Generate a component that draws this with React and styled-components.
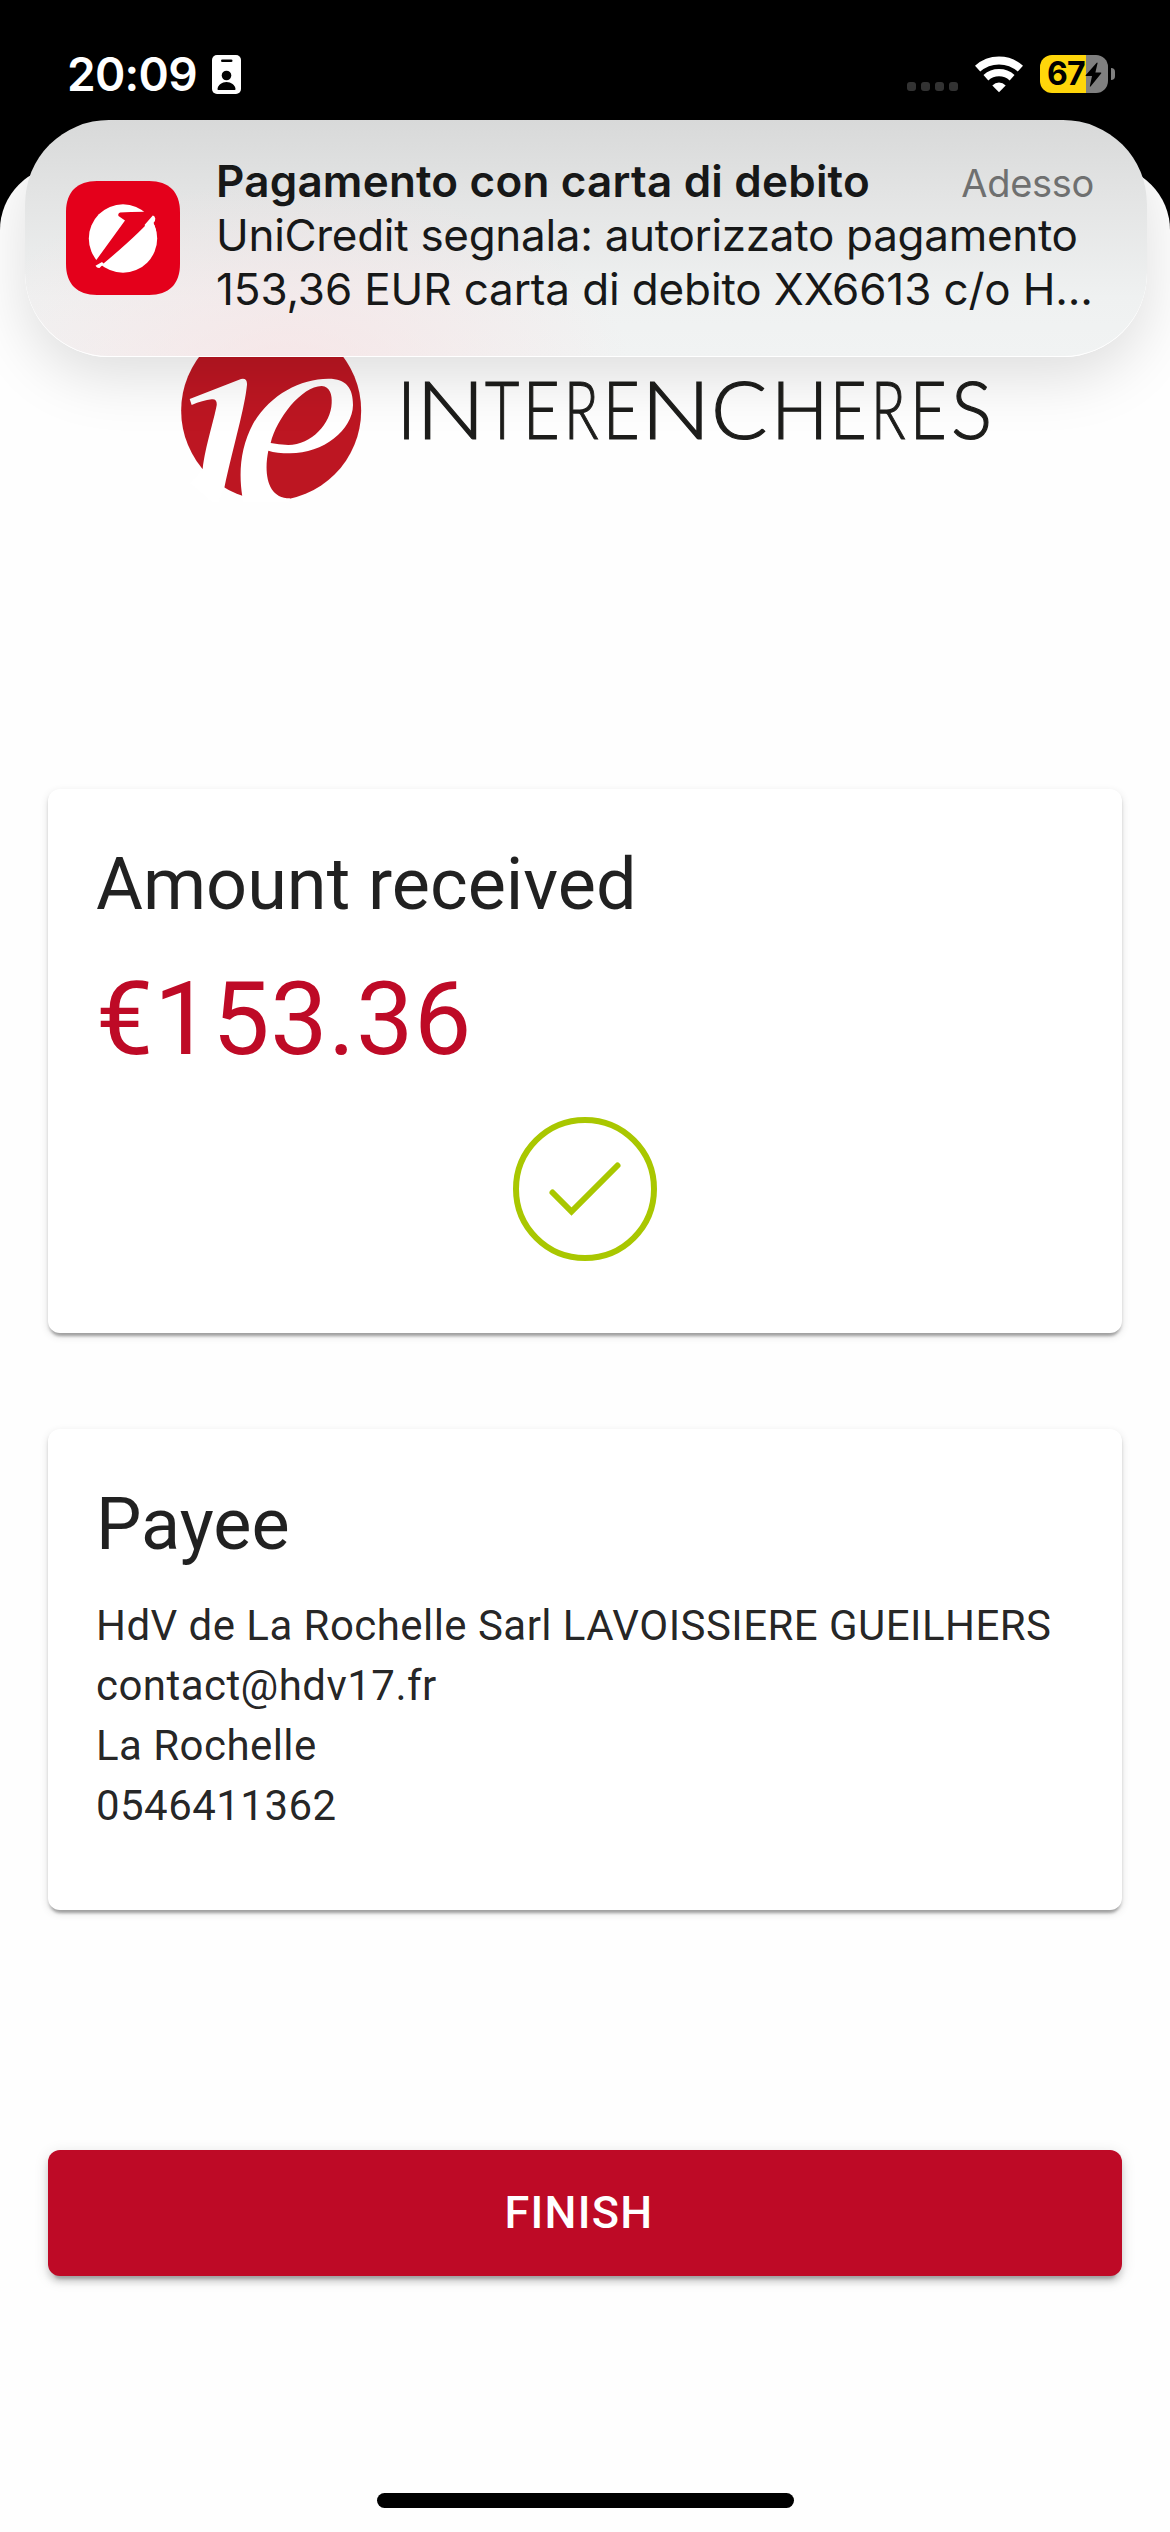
import React from "react";
import styled, { createGlobalStyle } from "styled-components";

const GlobalStyle = createGlobalStyle`
  * { box-sizing: border-box; }
  body { margin: 0; background: #000; }
`;

const Phone = styled.div`
  position: relative;
  display: flex;
  flex-direction: column;
  width: 1170px;
  height: 2532px;
  overflow: hidden;
  background: #000;
  font-family: Roboto, "Liberation Sans", sans-serif;
`;

const StatusBar = styled.header`
  display: flex;
  align-items: center;
  justify-content: space-between;
  flex: none;
  height: 166px;
  padding: 0 55px 18px 67px;
  font-family: Inter, "Liberation Sans", sans-serif;
`;

const StatusGroup = styled.div`
  display: flex;
  align-items: center;
  gap: ${(p) => p.$gap}px;
`;

const Clock = styled.span`
  width: 130px;
  font-size: 46px;
  font-weight: 600;
  line-height: 56px;
  letter-spacing: -0.7px;
  white-space: nowrap;
  color: #fff;
`;

const Signal = styled.div`
  display: flex;
  gap: 5px;
  padding-top: 25px;
`;

const SignalDot = styled.i`
  width: 9px;
  height: 9px;
  border-radius: 3px;
  background: #333;
`;

const BatteryWrap = styled.div`
  display: flex;
  align-items: center;
  gap: 3px;
`;

const BatteryBody = styled.div`
  display: flex;
  align-items: center;
  width: 68px;
  height: 38px;
  padding-left: 7px;
  border-radius: 12px;
  background: linear-gradient(90deg, #ffd60a 46px, #808080 46px);
  font-size: 32px;
  font-weight: 700;
  line-height: 38px;
  letter-spacing: -0.8px;
  color: #000;
`;

const BatteryTip = styled.i`
  width: 4px;
  height: 12px;
  border-radius: 0 4px 4px 0;
  background: #808080;
`;

const Sheet = styled.main`
  display: flex;
  flex-direction: column;
  flex: 1;
  padding: 154px 48px 24px;
  border-radius: 64px 64px 0 0;
  background: #fefefe;
`;

const Brand = styled.div`
  display: flex;
  gap: 35px;
  height: 182px;
  padding-left: 132px;
  margin-bottom: 287px;
`;

const Wordmark = styled.div`
  display: flex;
  padding-top: 39px;
  font-family: Lato, "Open Sans", sans-serif;
  font-weight: 300;
  font-size: 81px;
  line-height: 97px;
  color: #1d1d1b;
  -webkit-text-stroke: 1.2px #1d1d1b;
`;

const Letter = styled.span`
  flex: none;
  width: ${(p) => p.$advance}px;
  transform: scaleX(${(p) => p.$stretch});
  transform-origin: 0 50%;
`;

const Card = styled.section`
  flex: none;
  height: ${(p) => p.$height}px;
  padding: 48px;
  border-radius: 12px;
  background: #fff;
  color: rgba(0, 0, 0, 0.87);
  box-shadow: 0 6px 3px -3px rgba(0, 0, 0, 0.2), 0 3px 3px rgba(0, 0, 0, 0.14),
    0 3px 9px rgba(0, 0, 0, 0.12);

  & + & {
    margin-top: 96px;
  }
`;

const CardTitle = styled.h2`
  margin: 0 0 23px;
  font-size: 72px;
  font-weight: 400;
  line-height: 96px;
`;

const Amount = styled.div`
  font-size: 102px;
  line-height: 126px;
  letter-spacing: 0.00735em;
  color: #be0a26;
`;

const Success = styled.div`
  display: flex;
  justify-content: center;
  padding-top: 35px;
`;

const PayeeLine = styled.p`
  margin: 0;
  font-size: 42px;
  line-height: 60px;
  letter-spacing: 0.01071em;
  white-space: nowrap;
`;

const FinishButton = styled.button`
  flex: none;
  height: 126px;
  margin-top: 240px;
  padding: 0 12px 2px 0;
  border: 0;
  border-radius: 12px;
  background: #be0a26;
  color: #fff;
  font-family: inherit;
  font-size: 45px;
  font-weight: 500;
  letter-spacing: 0.02857em;
  text-transform: uppercase;
  box-shadow: 0 9px 3px -6px rgba(0, 0, 0, 0.2), 0 6px 6px rgba(0, 0, 0, 0.14),
    0 3px 15px rgba(0, 0, 0, 0.12);
`;

const HomeIndicator = styled.div`
  align-self: center;
  width: 417px;
  height: 15px;
  margin-top: auto;
  border-radius: 8px;
  background: #000;
`;

const Banner = styled.aside`
  position: absolute;
  top: 120px;
  left: 25px;
  display: flex;
  align-items: center;
  gap: 36px;
  width: 1122px;
  height: 237px;
  padding: 0 53px 0 41px;
  border-radius: 84px;
  border-bottom: 1px solid #fff;
  font-family: Inter, "Liberation Sans", sans-serif;
  color: #171818;
  background: radial-gradient(340px 190px at 265px 250px, rgba(250, 222, 224, 0.6), rgba(250, 222, 224, 0) 100%),
    linear-gradient(180deg, #d8d9d9 0%, #e4e5e5 35%, #eff1f1 75%, #f1f3f3 100%);
  box-shadow: 0 20px 60px rgba(0, 0, 0, 0.13);
`;

const BannerText = styled.div`
  flex: 1;
  min-width: 0;
  padding-bottom: 6px;
`;

const BannerHead = styled.div`
  display: flex;
  align-items: baseline;
  justify-content: space-between;
  height: 54px;
  line-height: 54px;
`;

const BannerTitle = styled.strong`
  font-size: 44px;
  font-weight: 600;
  letter-spacing: 0.2px;
  white-space: nowrap;
`;

const BannerTime = styled.span`
  font-size: 38px;
  letter-spacing: -0.3px;
  color: #6f7070;
`;

const BannerLine = styled.div`
  font-size: 44px;
  line-height: 54px;
  letter-spacing: ${(p) => p.$spacing}px;
  white-space: nowrap;
`;

const BadgeIcon = () => (
  <svg width="29" height="39" viewBox="0 0 29 39">
    <rect width="29" height="39" rx="5" fill="#fff" />
    <rect x="9" y="4.5" width="11.5" height="2.6" rx="1.3" fill="#000" />
    <circle cx="14.5" cy="20.5" r="4.8" fill="#000" />
    <path d="M5.5 34c.4-4 4.5-7 9-7s8.600 3 9 7c0 .7-.4 1-1 1H6.500c-.6 0-1-.3-1-1z" fill="#000" />
  </svg>
);

const WifiIcon = () => (
  <svg width="48" height="37" viewBox="0 0 48 37">
    <g fill="none" stroke="#fff">
      <path d="M2.600 12.700A32 32 0 0 1 45.400 12.700" strokeWidth="7.800" />
      <path d="M10.900 21.700A19.700 19.700 0 0 1 37.100 21.700" strokeWidth="7.300" />
    </g>
    <path d="M24 36.200L17.300 29.400Q20.200 26.500 24 26.500T30.700 29.400z" fill="#fff" />
  </svg>
);

const BoltIcon = () => (
  <svg width="17" height="25" viewBox="0 0 17 25">
    <path d="M11.700 0.700L0.600 13.300Q0.300 14 1 14H7L4.800 24.200Q5 25 5.800 24.300L16.300 11.300Q16.500 10.500 15.800 10.500H10.400L12.600 1Q12.400 0.200 11.700 0.700z" fill="#000" />
  </svg>
);

const BankIcon = () => (
  <svg width="114" height="114" viewBox="0 0 114 114">
    <path d="M31 0H83C103 0 114 11 114 31V83C114 103 103 114 83 114H31C11 114 0 103 0 83V31C0 11 11 0 31 0z" fill="#e4001b" />
    <circle cx="57" cy="57.500" r="34.200" fill="#fff" />
    <path d="M54 31.500Q64 30.800 79 30.800L90 34L88.500 34.500Q74 52 36 83.800L29 84L24 86L30.700 78.500L59 39.500L52.500 35Q51.500 32.500 54 31.500z" fill="#e4001b" />
    <path d="M78.500 44L86.800 34.600Q88.500 34.500 89.300 37.500Q89.500 40 87.500 42L90 49L84 52z" fill="#fff" />
    <path d="M29.500 84.800L36 81L38.500 83.500L35.500 85L33.500 87Q31 87.300 29.500 84.800z" fill="#fff" />
  </svg>
);

const BrandMark = () => (
  <svg width="182" height="182" viewBox="60 -60 546 546">
    <circle cx="333.500" cy="212" r="270" fill="#bd1622" />
    <ellipse cx="225" cy="18" rx="32" ry="32" fill="#fff" />
    <path d="M89 177L243 117Q262 113 261 134C254 205 222 310 193 443L170 500L90 430L128 386C136 320 162 240 170 196Q172 176 155 178Q128 181 95 195z" fill="#fff" />
    <path
      d="M247 470C236 400 240 325 280 250C330 165 420 116 505 116C560 116 579 145 579 195C578 270 490 340 390 340Q350 340 325 332C311 400 322 475 390 475L380 500H250z"
      fill="#fff"
    />
    <path d="M332 309C350 235 425 139 485 138C510 139 517 165 515 190C513 250 455 315 385 315Q355 314 332 309z" fill="#bd1622" />
  </svg>
);

const CheckIcon = () => (
  <svg width="144" height="144" viewBox="0 0 144 144" fill="none" stroke="#a9c700">
    <circle cx="72" cy="72" r="69" strokeWidth="6" />
    <path d="M39.500 75.500L58.500 94.500L104.500 48.500" strokeWidth="6" strokeLinecap="round" />
  </svg>
);

/* Geometric proportions: wide N and C, narrow E, R, T. Each entry is letter, advance, stretch. */
const LETTERS = [
  ["I", 19.2, 0.9],
  ["N", 69.2, 1.13],
  ["T", 37.5, 0.73],
  ["E", 41.2, 0.78],
  ["R", 39.3, 0.7],
  ["E", 37.7, 0.78],
  ["N", 70.2, 1.14],
  ["C", 59.4, 1.03],
  ["H", 59.2, 0.94],
  ["E", 40.7, 0.78],
  ["R", 39.8, 0.7],
  ["E", 40.9, 0.78],
  ["S", 41.3, 0.95],
];

export default function App() {
  return (
    <Phone>
      <GlobalStyle />
      <StatusBar>
        <StatusGroup $gap={15}>
          <Clock>20:09</Clock>
          <BadgeIcon />
        </StatusGroup>
        <StatusGroup $gap={17}>
          <Signal>
            <SignalDot />
            <SignalDot />
            <SignalDot />
            <SignalDot />
          </Signal>
          <WifiIcon />
          <BatteryWrap>
            <BatteryBody>
              67
              <BoltIcon />
            </BatteryBody>
            <BatteryTip />
          </BatteryWrap>
        </StatusGroup>
      </StatusBar>

      <Sheet>
        <Brand>
          <BrandMark />
          <Wordmark>
            {LETTERS.map(([letter, advance, stretch], i) => (
              <Letter key={i} $advance={advance} $stretch={stretch}>
                {letter}
              </Letter>
            ))}
          </Wordmark>
        </Brand>

        <Card $height={544}>
          <CardTitle>Amount received</CardTitle>
          <Amount>€153.36</Amount>
          <Success>
            <CheckIcon />
          </Success>
        </Card>

        <Card $height={481}>
          <CardTitle>Payee</CardTitle>
          <PayeeLine>HdV de La Rochelle Sarl LAVOISSIERE GUEILHERS</PayeeLine>
          <PayeeLine>contact@hdv17.fr</PayeeLine>
          <PayeeLine>La Rochelle</PayeeLine>
          <PayeeLine>0546411362</PayeeLine>
        </Card>

        <FinishButton>Finish</FinishButton>
        <HomeIndicator />
      </Sheet>

      <Banner>
        <BankIcon />
        <BannerText>
          <BannerHead>
            <BannerTitle>Pagamento con carta di debito</BannerTitle>
            <BannerTime>Adesso</BannerTime>
          </BannerHead>
          <BannerLine $spacing={-0.3}>UniCredit segnala: autorizzato pagamento</BannerLine>
          <BannerLine $spacing={-0.125}>153,36 EUR carta di debito XX6613 c/o H...</BannerLine>
        </BannerText>
      </Banner>
    </Phone>
  );
}
